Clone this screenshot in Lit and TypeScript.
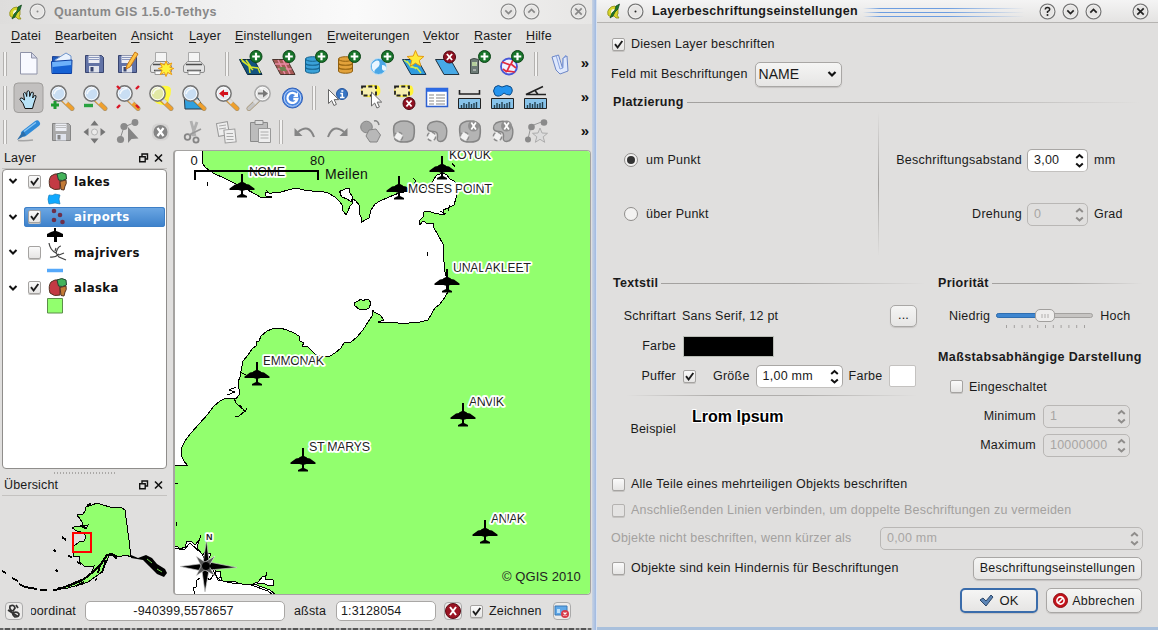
import { LitElement, html, svg, css, TemplateResult } from "lit";
import { customElement, property } from "lit/decorators.js";

type Glyph = TemplateResult;

/* ---------- shared icon fragments, drawn on a 33 x 34 cell ---------- */

const plusBadge = svg`<circle cx="19.5" cy="11.5" r="6" fill="#17742a" stroke="#0c4417"/>
  <path d="M15.7 11.5h7.6M19.5 7.7v7.6" stroke="#fff" stroke-width="2.2"/>`;
const badge = (dx: number, dy: number) => svg`<g transform="translate(${dx} ${dy})">${plusBadge}</g>`;
const redBadge = (x: number, y: number) => svg`<circle cx=${x} cy=${y} r="6" fill="#8f1020" stroke="#4c0610"/>
  <path d="M${x - 2.6} ${y - 3}l5.2 6m0 -6l-5.2 6" stroke="#fff" stroke-width="1.9"/>`;

const lens = (fill = "#c9def3", handle = "#f0a02c", rim = "#777") => svg`
  <path d="M18 19l9 8.5" stroke="#7a5a20" stroke-width="5" stroke-linecap="round" opacity=".55"/>
  <path d="M18 19l9 8.5" stroke=${handle} stroke-width="3.6" stroke-linecap="round"/>
  <path d="M18 18l4 4" stroke="#ddd" stroke-width="3.4"/>
  <circle cx="13.5" cy="12.5" r="7.6" fill=${fill} stroke=${rim} stroke-width="1.6"/>
  <circle cx="13.5" cy="12.5" r="6.3" fill="none" stroke="#fff" stroke-width=".9"/>
  <path d="M9 13q1-5 7-5.500" stroke="#fff" stroke-width="1.600" fill="none" opacity=".8"/>`;

const printer = svg`
  <path d="M11.500 5.500h11v10h-11z" fill="#f4f4f4" stroke="#aaa"/>
  <path d="M6.500 19l4-4.500h13l4 4.500v5q0 1.500-1.500 1.500h-18q-1.500 0-1.500-1.500z" fill="#e3e3e3" stroke="#8d8d8d"/>
  <path d="M9 17.500h16M10 23.500h14" stroke="#4d4d4d" stroke-width="1.400"/>
  <path d="M11 24h12v3.500h-12z" fill="#fafafa" stroke="#999"/>`;

const disk = (a: string, b: string) => svg`
  <path d="M7.500 8.500h16l2 2v15h-18z" fill=${a} stroke=${b}/>
  <path d="M10.500 8.500h11v7.500h-11z" fill="#eceef4"/><path d="M11 10.500h10M11 12.500h10" stroke=${a} stroke-width=".7"/>
  <path d="M11 19h10v6.500h-10z" fill="#dfe3ec"/><path d="M12.500 20h3v4.500h-3z" fill=${b}/>`;

const cylinder = (a: string, b: string) => svg`
  <path d="M5.500 12v12c0 3 14 3 14 0v-12z" fill=${a} stroke=${b}/>
  <ellipse cx="12.500" cy="12" rx="7" ry="2.300" fill=${a} stroke=${b}/>
  <path d="M5.500 16c0 3 14 3 14 0M5.500 20c0 3 14 3 14 0" fill="none" stroke=${b} stroke-width="1.200"/>`;

const ruler = svg`<path d="M5.500 17.500h22v10h-22z" fill="#87c3ea" stroke="#222"/>
  <path d="M8.500 27v-3m2.500 3v-5m2.500 5v-4m2.500 4v-6m2.500 6v-4m2.500 4v-5m2.500 5v-6" stroke="#23404f" stroke-width="1.400"/>`;

const cursor = (x: number, y: number) => svg`<path d="M${x} ${y}v14l3.200-3 2.200 5 2.500-1.100-2.200-4.800h4.500z" fill="#fff" stroke="#666" stroke-width="1"/>`;

const selection = svg`<path d="M9 6q8-4 16-1 3 6 0 9-8 4-16 1-4-6 0-9z" fill="#fff23a"/>
  <path d="M8 5.500h14v9h-14z" fill="#f6efb0" stroke="#222" stroke-width="1.800" stroke-dasharray="4 2.300"/>`;

const blob = svg`<path d="M7 11q2-5 10-5t10 5q1 8-1 13-2 3-9 3t-9-3q-2-8-1-13z" fill="#b4b4b4" stroke="#858585" stroke-width="1.600"/>`;
const hook = svg`<path d="M10 8q7-3.500 13 0 5 4 3.500 12-1 6-6 6.500-4 0-3-5 .5-5-4-5-6 0-6-3.500 0-3 2.500-5z" fill="#b4b4b4" stroke="#858585" stroke-width="1.400"/>`;
const ringlet = svg`<circle cx="11.500" cy="21.500" r="4.200" fill="#f2f2f2" stroke="#8c8c8c" stroke-width="1.500" stroke-dasharray="4 2.500"/>`;
const greyX = svg`<circle cx="20.500" cy="11" r="5.500" fill="#909090"/><path d="M18.300 7.500l4.600 7m0-7l-4.600 7" stroke="#fff" stroke-width="1.700"/>`;

const I: Record<string, Glyph> = {
  fresh: svg`<path d="M8.500 5.500h11l5.500 5.500v16h-16.500z" fill="#f8f9ff" stroke="#8f93a8"/><path d="M19.500 5.500v5.500h5.500z" fill="#d5d8ea" stroke="#8f93a8"/>`,
  open: svg`<path d="M7.500 9.500l8 .5 10-1v16h-18z" fill="#1c5bc0" stroke="#1a3f93"/><path d="M10 13l11-7 5 3v8h-16z" fill="#e9f2fd" stroke="#6f94ca"/>
    <path d="M7 26.500l-.5-12 20.500-1.500-.5 13.500z" fill="#6db1fa" stroke="#0a3c9f"/><path d="M7.500 20l19-2-.3 8H7.500z" fill="#1662d4"/>`,
  save: disk("#6273a6", "#38446f"),
  saveAs: svg`${disk("#6273a6", "#38446f")}<path d="M24 5l3 2-8 13-4 2 1-4z" fill="#ffc446" stroke="#c8761a"/>`,
  printNew: svg`${printer}<path d="M22 14l1.600 4 4.200-2-2 4.300 4 1.200-4 1.700 2 4.300-4.200-2-1.600 4-1.600-4-4.200 2 2-4.300-4-1.700 4-1.200-2-4.300 4.200 2z" fill="#fff23c" stroke="#ee9c12"/>`,
  print: printer,
  vector: svg`<path d="M5.500 12.500h14.500l8 15h-14.500z" fill="#13537f" stroke="#0b2a3e"/><path d="M8 14l7 5 1 7M12 13l5 7 7 1 2 5M7 12l12 11" stroke="#d7e629" stroke-width="1.500" fill="none"/>${badge(2.5, -2)}`,
  raster: svg`<path d="M5.500 12.500h14.500l8 15h-14.500z" fill="#a65a55" stroke="#4a332d"/><path d="M8 17h14M10.500 22h14M11 13l7 14M16 13l7 14" stroke="#e88aa3" stroke-width="1.500"/><path d="M12 20h6l2 4h-6z" fill="#6d8450"/>${badge(2.5, -2)}`,
  postgis: svg`${cylinder("#3aa1d8", "#15628d")}${badge(2, -2)}`,
  spatialite: svg`${cylinder("#e2a23b", "#91600f")}${badge(2, -2)}`,
  wms: svg`<circle cx="12.500" cy="19.500" r="8" fill="#4aa7e6" stroke="#c3e0f4"/><path d="M6 17q4-5 7-3 2 4-2 7t-2 5q-4-3-3-9zM16 18q5 0 4 5-3 2-4-1z" fill="#e9f6ff"/>${badge(2, -2)}`,
  newShape: svg`<path d="M3.500 12.500h15l8.500 15h-15z" fill="#2f9bde" stroke="#14334e"/><path d="M8 14l4 6 6 1 4 5M5 13l12 9" stroke="#cfec4d" stroke-width="1.500" fill="none"/>
    <path d="M16.500 3.500l2.400 5.600 6 .4-4.600 3.900 1.500 5.900-5.300-3.200-5.200 3.200 1.400-5.900-4.600-3.900 6.100-.4z" fill="#ffe93b" stroke="#e59a12"/>`,
  remove: svg`<path d="M3.500 12.500h15l8.500 15h-15z" fill="#47a9e6" stroke="#22323f"/>${redBadge(17.5, 10)}`,
  gps: svg`<path d="M5.500 12.500q3-2 8 0v14h-8z" fill="#6c7a75" stroke="#414a47"/><path d="M7 15h5v4h-5z" fill="#b4cf9c"/><path d="M11 16h1M8 23h3" stroke="#ddd"/>${badge(0, -2)}`,
  wfs: svg`<circle cx="11" cy="19.500" r="8" fill="#eef1ff" stroke="#4656d6" stroke-width="1.800"/><path d="M4 15l8 3-3 6 8 1M15 13l-2 4 5 4M5 22l4 3" stroke="#e22b3e" stroke-width="1.700" fill="none"/>${badge(0, -2)}`,
  book: svg`<path d="M9 10l4 13 4 4 8-3-1-15-4 2-.5 10-4-13z" fill="#dfe8fc" stroke="#6c86c6"/><path d="M13 8l4 14 3-1v-10l3-3" fill="none" stroke="#8ba5e0"/>`,
  hand: svg`<rect x="2" y="2" width="29" height="29.500" rx="4" fill="#c2c0bf" stroke="#a09e9c"/>
    <path d="M13 27.500l-2-5-3-4q0-2 2-1.500l2.500 2-1-6.500q1-2 2.500 0l.7 3 .3-5q1.600-1.500 2.500 0l.2 5 1.500-4q2-1 2.200.5l-.7 5 1.800-2.500q2-.4 1.500 1.500l-2 6-1.500 5.500z" fill="#b9e3f7" stroke="#111"/>`,
  zoomIn: svg`${lens()}<path d="M6 24h8M10 20v8" stroke="#1f9a31" stroke-width="3"/>`,
  zoomOut: svg`${lens()}<path d="M6 24.500h9" stroke="#2aa341" stroke-width="3.400"/>`,
  zoomFull: svg`${lens()}<path d="M6 5l3 3M28 5l-3 3M6 27l3-3M28 27l-3-3" stroke="#da1625" stroke-width="2.400"/>`,
  zoomSel: svg`<path d="M17 5q10-1 10 4t-2 8q0 8-6 7-8-1-9-5z" fill="#fff93b"/>${lens("#e1e8a4")}`,
  zoomLayer: svg`<path d="M7 12h11l9 16h-19z" fill="#31a0dd" stroke="#2b3b49"/>${lens()}`,
  zoomLast: svg`${lens("#e4e8ee")}<path d="M18 12h-4v2.500l-5-4 5-4v2.500h4z" fill="#d3121d" transform="translate(0 2)"/>`,
  zoomNext: svg`<g transform="matrix(-1 0 0 1 33 0)">${lens("#e2e2e2", "#c4c4c4", "#aaa")}</g><path d="M15 11.500h5v-3l5 4-5 4v-3h-5z" fill="#777"/>`,
  refresh: svg`<circle cx="16.500" cy="17" r="10" fill="#4b86e0" stroke="#2e5fb8"/><circle cx="16.500" cy="17" r="8.300" fill="none" stroke="#bcd4f7"/><path d="M20.500 14a5 5 0 1 0 .8 4h-4" fill="none" stroke="#fff" stroke-width="2.300"/><path d="M22 11v5h-5z" fill="#fff"/>`,
  identify: svg`<circle cx="21" cy="13" r="5.500" fill="#3775c4" stroke="#24549b"/><path d="M19.300 12.500h2v4M19 16.500h4.500M20.300 10h2" stroke="#fff" stroke-width="1.500" fill="none"/>${cursor(7.5, 8.5)}`,
  select: svg`${selection}${cursor(17.5, 11)}`,
  deselect: svg`${selection}${redBadge(22, 22.5)}`,
  table: svg`<path d="M6.500 7.500h21v18h-21z" fill="#fff" stroke="#2d60d1" stroke-width="1.500"/><path d="M6.500 9h21" stroke="#2d6be6" stroke-width="3.500"/><path d="M9 14h5m2 0h9M9 17h5m2 0h9M9 20h5m2 0h9M9 23h5m2 0h9" stroke="#888" stroke-width="1.200"/>`,
  length: svg`${ruler}<path d="M6.500 9v4h20v-4" fill="none" stroke="#222" stroke-width="1.600"/>`,
  area: svg`${ruler}<path d="M9 6q3-3 7 0 5-3 9 0 3 4-1 8-4 0-6-2-5 5-9 2-3-4 0-8z" fill="#2494ef" stroke="#0d4b87"/>`,
  angle: svg`${ruler}<path d="M27 13.500h-20l17-8M16 9.500l3 4" fill="none" stroke="#222" stroke-width="1.600"/>`,
  edit: svg`<path d="M6 25.500q8 .5 15-.5" stroke="#a5a5a5" stroke-width="1.500" fill="none"/><path d="M25 8.500l-13 10" stroke="#2e8ad8" stroke-width="6" stroke-linecap="round"/><path d="M11 16l-6 9 9-5z" fill="#2c6ea9"/><path d="M24 7.500l-12 9" stroke="#8bc6f4" stroke-width="1.300"/>`,
  saveGrey: disk("#a9a9a9", "#858585"),
  move: svg`<path d="M16.500 5.500l4 5h-8zM16.500 28.500l4-5h-8zM5.500 17l5-4v8zM27.500 17l-5-4v8z" fill="#757575"/><circle cx="16.500" cy="17" r="3" fill="#ecebea" stroke="#b5b5b5"/>`,
  node: svg`<path d="M9 24l4-12 12-5" stroke="#8c8c8c" fill="none"/><circle cx="9.500" cy="24.500" r="3.600" fill="#8a8a8a"/><circle cx="13" cy="11.500" r="3.600" fill="#8a8a8a"/><circle cx="24" cy="7.500" r="3.400" fill="#8a8a8a"/><path d="M17 12v16l3.500-4 7-.5z" fill="#858585"/>`,
  del: svg`<rect x="8" y="8.500" width="17" height="17" rx="6" fill="#d3d2d1"/><circle cx="16.500" cy="17" r="7" fill="#858585"/><path d="M13.500 13l6 8m0-8l-6 8" stroke="#fff" stroke-width="2.200"/>`,
  cut: svg`<path d="M14 6l4 15M20 7l-5 14" stroke="#b0b0b0" stroke-width="2.800"/><circle cx="10.500" cy="22" r="2.800" fill="none" stroke="#858585" stroke-width="1.800"/><circle cx="19" cy="25" r="2.600" fill="none" stroke="#858585" stroke-width="1.800"/><path d="M12 20l12-6" stroke="#999" stroke-width="1.800"/>`,
  copy: svg`<path d="M7.500 7.500h11v13h-11z" transform="rotate(-10 13 14)" fill="#eee" stroke="#999"/><path d="M14.500 14.500h11v13h-11z" transform="rotate(-6 20 21)" fill="#eee" stroke="#999"/><path d="M9 11l7-1m-7 4l7-1M16.500 18.500h6.500m-6.500 3h7m-7 3h7" stroke="#aaa"/>`,
  paste: svg`<path d="M7.500 7.500h17v19h-17z" fill="#bcbcbc" stroke="#8a8a8a"/><path d="M12 5.500h8v4h-8z" fill="#ddd" stroke="#8a8a8a"/><path d="M15.500 13.500h12v14h-12z" fill="#eee" stroke="#999"/><path d="M17.500 17h8m-8 3h8m-8 3h8" stroke="#aaa"/>`,
  undo: svg`<path d="M26 22q-5-14-16-5" fill="none" stroke="#858585" stroke-width="2"/><path d="M6.500 13v8h8z" fill="#858585"/>`,
  redo: svg`<path d="M7 22q5-14 16-5" fill="none" stroke="#858585" stroke-width="2"/><path d="M26.500 13v8h-8z" fill="#858585"/>`,
  simplify: svg`<circle cx="12.500" cy="12" r="5.800" fill="#a2a2a2" stroke="#858585"/><path d="M15 15l7-1 4.500 6-3.500 7h-7l-4-6z" fill="#b8b8b8" stroke="#858585"/><path d="M20 6q4-1 5 4" stroke="#858585" fill="none" stroke-width="1.500"/>`,
  ring: svg`${blob}${ringlet}`,
  island: svg`${hook}${ringlet}`,
  delRing: svg`${blob}${ringlet}${greyX}`,
  delPart: svg`${hook}${ringlet}${greyX}`,
  reshape: svg`<path d="M9 24l3-13 13-5" stroke="#999" fill="none"/><circle cx="9" cy="24.500" r="3" fill="#8a8a8a"/><circle cx="12.500" cy="12" r="3.300" fill="#8a8a8a"/><circle cx="25" cy="7.500" r="3.300" fill="#8a8a8a"/><path d="M21 13l2 5 5.500.3-4.300 3.500 1.500 5.500-4.700-3-4.700 3 1.500-5.500-4.300-3.500 5.500-.3z" fill="#dcdcdc" stroke="#adadad"/>`,
};

const shared = css`
  * { box-sizing: border-box; }
  svg { display: block; flex: none; }
`;

@customElement("tool-strip")
class ToolStrip extends LitElement {
  @property({ attribute: false }) groups: string[][] = [];
  static styles = [shared, css`
    :host { display: flex; align-items: center; height: 34px; padding-left: 3px; }
    .handle { width: 4px; height: 24px; border: solid #b3b1af; border-width: 0 1px; background: #f3f2f1; flex: none; margin-right: 5px; }
    .group { display: flex; margin-right: 3px; }
    .short { margin-right: 15px; }
    .more { margin-left: auto; margin-right: 3px; padding-bottom: 3px; font: bold 15px/15px "Liberation Sans", sans-serif; letter-spacing: 0; color: #111; }
  `];
  render() {
    return html`${this.groups.map((g) => html`<span class="handle"></span>
      <span class="group ${g.length === 6 ? "short" : ""}">${g.map((n) => html`<svg width="33" height="34" viewBox="0 0 33 34">${I[n]}</svg>`)}</span>`)}
      <span class="more">»</span>`;
  }
}

@customElement("check-mark")
class CheckMark extends LitElement {
  @property({ type: Boolean }) on = false;
  @property({ type: Boolean }) dim = false;
  static styles = [shared, css`
    :host { display: block; width: 14px; height: 14px; flex: none; }
    .box { width: 13px; height: 13px; margin: .5px; border: 1px solid #a5a3a1; border-radius: 2px; background: linear-gradient(#fafafa, #e6e5e4); box-shadow: 0 1px 0 #c5c3c1; }
    .dim { border-color: #b4b2b0; background: #e4e3e2; }
  `];
  render() {
    return html`<div class="box ${this.dim ? "dim" : ""}">${this.on ? html`<svg width="11" height="11" viewBox="0 0 11 11"><path d="M2 5.200l2.600 3.300L9.300 2" fill="none" stroke="#1c1c1c" stroke-width="1.900"/></svg>` : ""}</div>`;
  }
}

@customElement("spin-field")
class SpinField extends LitElement {
  @property() value = "";
  @property({ type: Boolean }) dim = false;
  static styles = [shared, css`
    :host { display: block; height: 23px; flex: none; }
    .field { display: flex; align-items: center; justify-content: space-between; height: 23px; padding: 0 3px 0 6px; border: 1px solid #a9a7a5; border-bottom-color: #c3c1bf; border-radius: 5px; background: #fff; }
    .dim { background: transparent; color: #a8a6a4; border-color: #b9b7b5; }
  `];
  render() {
    return html`<div class="field ${this.dim ? "dim" : ""}"><span>${this.value}</span>
      <svg width="9" height="17" viewBox="0 0 9 17"><path d="M1.200 6L4.500 3l3.300 3M1.200 11.500l3.300 3 3.300-3" fill="none" stroke=${this.dim ? "#8f8d8b" : "#111"} stroke-width="2"/></svg></div>`;
  }
}

@customElement("title-button")
class TitleButton extends LitElement {
  @property() kind = "";
  @property({ type: Boolean }) active = false;
  static styles = [shared, css`:host { display: block; width: 17px; height: 17px; flex: none; }`];
  render() {
    const c = this.active ? "#222" : "#888";
    const marks: Record<string, Glyph> = {
      dot: svg`<circle cx="8.500" cy="8.500" r="1" fill=${c}/>`,
      down: svg`<path d="M5.300 7.300l3.200 3.200 3.200-3.200" fill="none" stroke=${c} stroke-width="1.700"/>`,
      up: svg`<path d="M5.300 9.700l3.200-3.200 3.200 3.200" fill="none" stroke=${c} stroke-width="1.700"/>`,
      close: svg`<path d="M5.300 5.300l6.400 6.400m0-6.400l-6.400 6.400" fill="none" stroke=${c} stroke-width="1.700"/>`,
      help: svg`<path d="M6.300 6.600q0-2.200 2.200-2.200t2.200 2q0 1.200-2.200 2.300v1.300" fill="none" stroke=${c} stroke-width="1.500"/><circle cx="8.500" cy="12" r="1" fill=${c}/>`,
    };
    return html`<svg width="17" height="17" viewBox="0 0 17 17"><circle cx="8.500" cy="8.500" r="7.400" fill="#e6e5e4" stroke=${this.active ? "#777" : "#8b8b8b"} stroke-width="1.300"/><circle cx="8.500" cy="8.500" r="6.300" fill="none" stroke="#f6f6f6" stroke-width=".7"/>${marks[this.kind]}</svg>`;
  }
}

const logo = html`<svg width="14" height="18" viewBox="0 0 14 18"><path d="M2 7q2-3 6-3l3 3v5l-1 1 2 3h-3l-2-2q-4 2-6-1-1-4 1-6z" fill="#d8d52a" stroke="#8d8b1a" stroke-width=".8"/><path d="M4.500 8q2-2 3.500 0l-2 5q-3-1-1.500-5z" fill="#f7f6dc"/><path d="M12.500 2L9 4 8 8l-3 3-2 5 3-2 2-4 3-3z" fill="#1d7a2d" stroke="#0e4419" stroke-width=".7"/></svg>`;

/* ---------- map canvas ---------- */

const planes: [number, number, string, number, number, number][] = [
  [242, 186, "NOME", 249, 176, 36], [399, 188, "MOSES POINT", 408, 193, 84], [442, 168, "KOYUK", 449, 159, 42],
  [447, 281, "UNALAKLEET", 453, 272, 78], [257, 374, "EMMONAK", 263, 365, 61], [463, 415, "ANVIK", 469, 406, 35],
  [303, 460, "ST MARYS", 309, 451, 61], [485, 532, "ANIAK", 491, 523, 34],
];

@customElement("map-canvas")
class MapCanvas extends LitElement {
  static styles = [shared, css`
    :host { display: block; margin-top: 1px; border: solid #a5a3a1; border-width: 1px 1px 1px 2px; border-radius: 4px; overflow: hidden; background: #fff; }
    .land { fill: #92ff6e; stroke: #000; stroke-width: 1; shape-rendering: crispEdges; }
    .sea { fill: #fff; stroke: #000; stroke-width: 1; shape-rendering: crispEdges; }
    .line { fill: none; stroke: #000; stroke-width: 1; shape-rendering: crispEdges; }
    .name { font: 12.500px "Liberation Sans", sans-serif; letter-spacing: 0; fill: #222; stroke: #fff; stroke-width: 3.500; stroke-linejoin: round; paint-order: stroke; }
    .north { font: bold 9px "Liberation Sans", sans-serif; }
    .plain { font: 13px "Liberation Sans", sans-serif; fill: #111; }
    .big { font: 14px "Liberation Sans", sans-serif; fill: #111; }
    .copy { font: 13px "Liberation Sans", sans-serif; fill: #222; }
  `];
  render() {
    return html`<svg width="415" height="443" viewBox="175 151 415 443">
      <path class="land" d="M202 150V163L206 168 210 171 215 174 224 178 236 184 246 189 255 194 262 198 272 197 266 196 265 193 268 192 266 190 270 194 274 192 281 192 288 190 296 188 304 190 312 191 320 191 328 193 335 197 340 202 342 205 343 211 346 215 348 211 350 206 352 204 353 199 356 201 359 205 359 213 361 217 361 223 365 220 369 218 371 210 375 204 380 201 389 197 399 193 414 190 430 186 434 179 437 175 443 173 447 175 450 179 454 181 457 184 456 198 454 205 448 208 443 210 444 214 439 214 434 213 428 211 424 212 423 217 419 221 420 225 423 221 428 224 433 223 434 228 438 235 443 244 443 255 444 262 445 272 448 283 448 292 445 297 440 304 435 308 432 313 428 320 420 322 411 322 407 324 398 323 390 322 384 323 378 322 384 320 380 315 374 312 373 310 372 316 368 322 363 330 357 337 351 342 344 343 341 348 335 353 330 356 322 357 315 354 311 350 308 347 302 346 304 343 300 341 299 336 294 333 287 330 280 328 272 329 267 331 261 336 259 341 256 342 257 345 252 349 248 355 243 361 241 371 240 377 238 382 239 389 239 395 236 399 226 398 220 401 214 406 208 414 199 424 191 433 185 441 182 447 181 455 184 461 187 465 182 465 174 466V547L177 546 180 549 185 547 187 541 191 541 195 545 199 540 197 548 201 552 200 558 205 552 211 554 208 560 213 565 216 572 222 578 221 581 234 581 240 584 254 584 262 587 270 590 276 595H591V150Z"/>
      <path class="land" d="M354 303L358 301 361 299 363 301 366 299 369 300 371 303 369 308 365 310 359 309 355 306Z"/>
      <path class="sea" d="M341 191L345 189 349 188 350 193 353 197 351 202 347 199 342 197 340 194Z"/>
      <path class="sea" d="M250 585L258 582 263 576 266 576 267 572 265 579 273 580 273 585 267 585 263 583 257 584ZM215 571L220 571 221 577 217 579ZM237 594L239 590 254 587 260 594Z"/>
      <path class="sea" d="M174 548L184 550 190 543 202 554 206 562 212 568 218 580 232 583 251 585 268 591 273 595 174 595Z" stroke="none"/>
      <path class="line" d="M207 182v4M427 252v4M341 190l-2 3M240 372l6 3M236 387l-7 3 6 2-8 3M234 398l2 5 9 8-7 6-3-1M240 405l5 7 2-4M200 578l-4 3v6l-3 1 2 6M204 576l6 4 4-6 6 6M201 535l-3 9M175 483h3M176 522v4M452 163l3 4M413 178l3 3-2 3M440 211l6 3M448 211l2-6"/>
      <g stroke="#000" fill="#000">
        <path d="M206.500 540l2.500 22 28 5.500-28 2.500-4 22-3-21-22-4.500 23-3z" stroke="#c7c7c7" stroke-width=".7"/>
        <path d="M196 556l9 6 10-6-6 10 6 10-10-6-9 6 5-10z" fill="#555" stroke="#eee" stroke-width=".6"/><circle cx="206" cy="566" r="3.500"/>
      </g>
      ${planes.map(([x, y, n, tx, ty, w]) => svg`
        <path transform="translate(${x} ${y})" d="M-1-12h2v8l3 1.500 0 .5 3 .5 2 1.500 3.500 2.500v1.500h-9l-2.500.7v3.300l4 2v1.500h-10v-1.500l4-2v-3.300l-2.500-.7h-9v-1.500l3.500-2.500 2-1.500 3-.5 0-.5 3-1.500z"/>
        <text class="name" x=${tx} y=${ty} textLength=${w} lengthAdjust="spacing">${n}</text>`)}
      <path d="M195 180v-9h123v9" fill="none" stroke="#000" stroke-width="2"/>
      <text class="plain" x="190.500" y="165">0</text><text class="plain" x="310" y="165">80</text>
      <text class="big" x="325" y="179" textLength="43">Meilen</text>
      <text class="name north" x="206" y="539.500">N</text>
      <text class="copy" x="502" y="581" textLength="79">© QGIS 2010</text>
    </svg>`;
  }
}

@customElement("map-overview")
class MapOverview extends LitElement {
  static styles = [shared, css`:host { display: block; } .land { fill: #92ff6e; stroke: #000; shape-rendering: crispEdges; } .isle { fill: none; stroke: #000; shape-rendering: crispEdges; }`];
  render() {
    return html`<svg width="165" height="98" viewBox="2 496 165 98">
      <path class="land" d="M97 503L92 505 86 507 85 511 83 514 77 515 80 519 82 522 83 526 88 525 86 529 80 526 76 526 72 528 77 531 84 533 86 537 84 541 79 542 74 546 73 551 73 556 79 556 80 562 84 566 91 567 94 566 91 574 82 581 70 586 58 588 68 588 88 582 102 572 109 556 114 554 118 557 126 555 131 557 129 540 127 525 125 510 122 508 110 507 103 505Z"/>
      <path class="isle" stroke-width="2" d="M62 588l10-4 12-5 9-7 8-8 6-9 5-1 5 5M100 565l-2 8M76 586l8-4M106 560l-4 13M87 505l4-1M80 526l7 2"/>
      <path class="isle" stroke-width="2" d="M2 571l4 2M12 578l6 3M19 584l6 3 12 2M40 590h7M53 590l8-1M62 537l4 3M54 550l2 2M56 570l2 2M68 556l4 1M95 580l2-1M82 582v3M77 562l4 2"/>
      <path d="M131 555l7 3 8-3 6 3 5 6 8 5 2 4-3 4-7-3-8-8-6-6-6-1-6-1z" fill="#000"/><path d="M147 559l5 4M157 569l5 3" stroke="#72d552"/>
      <rect x="73" y="533" width="18" height="19" fill="none" stroke="#f00" stroke-width="2"/>
    </svg>`;
  }
}

/* ---------- main window ---------- */

const polyIcon = svg`<path d="M3 4q4-3 8-2 0 4 1 6l0 9q-6 2-10-2-2-7 1-11z" fill="#c33a44" stroke="#532"/><path d="M9 2q5-3 9 0l.5 5q-4 2.500-8 1z" fill="#43b35a" stroke="#243"/><path d="M12 9.500l6-1.500q1 4-1 6l-1 4-3-.5z" fill="#c27a35" stroke="#532"/>`;
const layerIcons: Record<string, Glyph> = {
  poly: polyIcon,
  points: svg`<g fill="#6d2f49"><circle cx="6" cy="4" r="2.300"/><circle cx="12" cy="8" r="2.300"/><circle cx="6" cy="13" r="2.300"/><circle cx="14.500" cy="15" r="2.300"/></g>`,
  rivers: svg`<path d="M1 0q1 7 7 10l3 4 7 3M8 10q2-7 5-7M8 5l-1 3M11 12l5-2M2 14q5 1 9-3" fill="none" stroke="#444" stroke-width="1.200"/>`,
};
const layers: [string, string, boolean, Glyph][] = [
  ["lakes", "poly", true, svg`<path d="M2 4q4 1 6-1l5 1-1 4 1 5-5-1-6 1q-2-5 0-9z" fill="#10a9ff" stroke="#1477b2" stroke-width=".6"/>`],
  ["airports", "points", true, svg`<path d="M7 1h2v3l3 1 4 2v3h-6v5h-3v-5h-7v-3l4-2 3-1z" fill="#000"/>`],
  ["majrivers", "rivers", false, svg`<path d="M0 8.500h16" stroke="#55a8fa" stroke-width="3.500"/>`],
  ["alaska", "poly", true, svg`<path d="M.5.500h15v14.500h-15z" fill="#92ff6e" stroke="#5c8d4a"/>`],
];
const menu: string[] = ["Datei", "Bearbeiten", "Ansicht", "Layer", "Einstellungen", "Erweiterungen", "Vektor", "Raster", "Hilfe"];

@customElement("main-window")
class MainWindow extends LitElement {
  static styles = [shared, css`
    :host { display: flex; flex-direction: column; width: 592px; height: 630px; background: #e0dfde; letter-spacing: .15px; }
    .title { display: flex; align-items: center; height: 24px; padding: 0 5px 1px 9px; background: linear-gradient(90deg, #dedddc, #f0f0f0 35%, #fafafa 60%, #e7e6e5); color: #888; font-weight: bold; }
    .title .cap { margin: 0 auto 0 8px; letter-spacing: .34px; font-size: 12.500px; }
    .title title-button { margin-left: 6px; }
    .title .last { margin-left: 30px; }
    .menu { display: grid; grid-template-columns: 44px 76px 58px 46px 92px 96px 51px 52px 40px; height: 23px; align-items: center; padding-left: 11px; }
    .menu u { text-underline-offset: 2px; }
    .main { display: flex; height: 446px; padding: 0 1px 0 2px; }
    .docks { width: 165px; margin-right: 6px; display: flex; flex-direction: column; }
    .dock { display: flex; align-items: center; height: 20px; padding: 0 3px 1px 2px; border-bottom: 1px solid #c4c2c0; }
    .dock span { flex: 1; }
    .tree { height: 300px; border: 1px solid #8f8d8b; border-radius: 4px; background: #fff; padding: 1px 1px; font: bold 13px "DejaVu Sans Condensed", "DejaVu Sans", sans-serif; font-stretch: condensed; letter-spacing: .4px; color: #111; }
    .layer { display: flex; align-items: center; height: 20px; }
    .arrow { margin: 0 6px 0 4px; }
    .row { display: flex; align-items: center; flex: 1; height: 20px; padding-left: 3px; border-radius: 3px; }
    .row .kind { margin: 0 6px 0 7px; }
    .sel { background: linear-gradient(#6da8e4, #3c80ca); color: #fff; box-shadow: inset 0 0 0 1px #3d7fc6; }
    .legend { height: 15.600px; padding-left: 43px; }
    .grip { height: 6px; margin: 1px 50px 0 51px; background: radial-gradient(circle, #aaa8a6 .8px, transparent 1px) 0 0 / 3px 6px; }
    .status { display: flex; align-items: center; height: 32px; padding-left: 5px; }
    .input { height: 20px; border: 1px solid #a9a7a5; border-radius: 5px; background: #fff; font-size: 12.500px; line-height: 18px; flex: none; }
    .xy { width: 200px; text-align: center; margin-right: 9px; padding-right: 3px; }
    .scale { width: 100px; margin: 0 8px; padding-left: 4px; }
    .clip { overflow: hidden; width: 45px; margin: 0 9px 0 8px; direction: rtl; }
    .clip2 { width: 34px; }
    .draw { margin: 0 11px 0 6px; }
    .sq { width: 18px; height: 18px; border: 1px solid #aaa; border-radius: 4px; background: #ecebea; display: grid; place-items: center; flex: none; }
    .st { margin-right: 7px; }
    .under { margin-top: auto; height: 2px; background: repeating-linear-gradient(90deg, #666 0 3px, #aaa 3px 5px, #555 5px 10px, #b5b5b5 10px 12px); }
  `];
  render() {
    const dock = (t: string) => html`<div class="dock"><span>${t}</span>
      <svg width="25" height="10" viewBox="0 0 25 10"><path d="M3 3V1h5.500v5H6.500M.700 3.700h5.500v5H.700z" fill="none" stroke="#111" stroke-width="1.400"/><path d="M16 1.500l7 7m0-7l-7 7" stroke="#111" stroke-width="1.600"/></svg></div>`;
    return html`
      <div class="title">${logo}<title-button kind="dot"></title-button><span class="cap">Quantum GIS 1.5.0-Tethys</span>
        <title-button kind="down"></title-button><title-button kind="up"></title-button><title-button class="last" kind="close"></title-button></div>
      <div class="menu">${menu.map((m) => html`<span><u>${m[0]}</u>${m.slice(1)}</span>`)}</div>
      <tool-strip .groups=${[["fresh", "open", "save", "saveAs", "printNew", "print"], ["vector", "raster", "postgis", "spatialite", "wms", "newShape", "remove", "gps", "wfs"], ["book"]]}></tool-strip>
      <tool-strip .groups=${[["hand", "zoomIn", "zoomOut", "zoomFull", "zoomSel", "zoomLayer", "zoomLast", "zoomNext", "refresh"], ["identify", "select", "deselect", "table", "length", "area", "angle"]]}></tool-strip>
      <tool-strip .groups=${[["edit", "saveGrey", "move", "node", "del", "cut", "copy", "paste"], ["undo", "redo", "simplify", "ring", "island", "delRing", "delPart", "reshape"]]}></tool-strip>
      <div class="main">
        <div class="docks">
          ${dock("Layer")}
          <div class="tree">${layers.map(([n, k, on, leg], i) => html`
            <div class="layer"><svg class="arrow" width="10" height="8" viewBox="0 0 10 8"><path d="M1.500 2l3.500 3.500L8.500 2" fill="none" stroke="#111" stroke-width="2"/></svg>
              <span class="row ${i === 1 ? "sel" : ""}"><check-mark ?on=${on}></check-mark><svg class="kind" width="20" height="19" viewBox="0 0 20 19">${layerIcons[k]}</svg>${n}</span></div>
            <div class="legend"><svg width="16" height="16" viewBox="0 0 16 16">${leg}</svg></div>`)}</div>
          <div class="grip"></div>
          ${dock("Übersicht")}
          <map-overview></map-overview>
        </div>
        <map-canvas></map-canvas>
      </div>
      <div class="status">
        <span class="sq"><svg width="14" height="14" viewBox="0 0 14 14"><path d="M3 2q4-2 5 2l-2 3q-4-1-3-5zM6 9q4-2 6 1 0 3-4 3-3-2-2-4zM1 6l9 6M9 1l2 3" fill="none" stroke="#333" stroke-width="1.700"/></svg></span>
        <span class="clip">oordinat</span><span class="input xy">-940399,5578657</span>
        <span class="clip2">aßsta</span><span class="input scale">1:3128054</span>
        <span class="sq st"><svg width="16" height="16" viewBox="0 0 16 16"><circle cx="8" cy="8" r="7.500" fill="#9b1423" stroke="#5d0a14"/><path d="M5 4l6 8m0-8l-6 8" stroke="#fff" stroke-width="2"/></svg></span>
        <check-mark on></check-mark><span class="draw">Zeichnen</span>
        <span class="sq"><svg width="16" height="16" viewBox="0 0 16 16"><path d="M1 3h12v9H1z" fill="#5fa8e8" stroke="#3b79b5"/><path d="M3 6h3v4H3z" fill="#bfe0fa"/><circle cx="11" cy="11" r="4" fill="#d83a4a"/><path d="M9.500 9.500l3 3m0-3l-3 3" stroke="#fff" stroke-width="1.200"/></svg></span>
      </div>
      <div class="under"></div>`;
  }
}

/* ---------- label settings dialog ---------- */

@customElement("label-dialog")
class LabelDialog extends LitElement {
  static styles = [shared, css`
    :host { display: flex; flex-direction: column; width: 561px; height: 630px; background: #e0dfde; letter-spacing: .23px; }
    .title { display: flex; align-items: center; height: 23px; padding: 0 9px 0 10px; background: linear-gradient(#f4f4f4, #e4e3e2); border-bottom: 1px solid #b5b3b1; font-weight: bold; }
    .title .cap { margin: 0 5px 0 8px; letter-spacing: .3px; }
    .title title-button { margin-left: 6px; }
    .title .last { margin-left: 30px; }
    .lines { flex: 1; height: 10px; margin-top: 3px; background: repeating-linear-gradient(#6c9de0 0 1.500px, transparent 1.500px 4px); -webkit-mask: linear-gradient(90deg, transparent, #000 10%, #000 50%, transparent 95%); mask: linear-gradient(90deg, transparent, #000 10%, #000 50%, transparent 95%); }
    .body { padding: 11px 0 0 14px; height: 604px; }
    .row { display: flex; align-items: center; }
    .h20 { height: 20px; } .h26 { height: 26px; } .h28 { height: 28px; } .h30 { height: 30px; } .h34 { height: 34px; } .h40 { height: 40px; } .h54 { height: 54px; }
    check-mark + span { margin-left: 6px; }
    .select { display: flex; align-items: center; justify-content: space-between; width: 87px; height: 25px; margin-left: 7px; padding: 0 4px 0 3px; font-size: 14px; letter-spacing: 0; }
    .btn { border: 1px solid #a9a7a5; border-radius: 5px; background: linear-gradient(#f5f5f4, #e6e5e4); box-shadow: 0 1px 1px #c5c3c1; }
    .head { display: flex; align-items: center; font-weight: bold; padding-left: 2px; letter-spacing: .3px; white-space: nowrap; }
    .head i { flex: 1; height: 1px; margin-left: 3px; background: linear-gradient(90deg, #a3a19f, #a8a6a4 50%, transparent); }
    .h16 { height: 16px; width: 530px; }
    .place { display: flex; height: 153px; }
    .place .left { width: 267px; padding: 23px 0 0 13px; }
    .place .rule { width: 1px; height: 144px; margin-top: 2px; background: linear-gradient(transparent, #a3a19f 50%, transparent); }
    .place .right { padding-top: 23px; }
    .lab { text-align: right; }
    .lab143 { width: 143px; margin-right: 5px; letter-spacing: .28px; }
    .w61 { width: 61px; margin-right: 6px; }
    .radio { width: 14px; height: 14px; border: 1px solid #8f8d8b; border-radius: 50%; background: #f3f2f1; margin-right: 8px; display: grid; place-items: center; }
    .radio b { width: 8px; height: 8px; border-radius: 50%; background: #333; }
    .style { display: flex; height: 208px; }
    .text { width: 315px; margin-right: 12px; }
    .lab65 { width: 65px; margin-right: 6px; }
    .dots { width: 27px; height: 22px; margin-left: auto; margin-right: 9px; text-align: center; line-height: 18px; }
    .black { width: 91px; height: 21px; background: #000; border: 1px solid #b9bdb6; margin-left: 1px; }
    .white { width: 27px; height: 22px; background: #fff; border: 1px solid #c4c2c0; border-radius: 2px; margin-left: 7px; }
    .size { margin: 0 6px 0 17px; }
    .w87 { width: 87px; margin-right: 6px; }
    .line { height: 1px; margin: 6px 9px 5px 15px; background: linear-gradient(90deg, transparent, #b0aeac 30%, #b0aeac 60%, transparent); }
    .h56 { height: 56px; }
    .sample { font: bold 16px "Liberation Sans", sans-serif; letter-spacing: 0; color: #000; margin: 0 0 24px 10px; text-shadow: 1px 0 #fff, -1px 0 #fff, 0 1px #fff, 0 -1px #fff, 1px 1px #fff, -1px -1px #fff, 1px -1px #fff, -1px 1px #fff, 0 0 2px #fff; }
    .prio { width: 204px; }
    .prio .head { padding-left: 0; }
    .pad { padding-left: 11px; }
    .slider { margin: 3px 6px 0 6px; }
    .prio .big { height: 28px; margin-top: 14px; letter-spacing: .39px; }
    .h31 { height: 31px; padding-left: 11px; }
    .lab98 { width: 98px; margin-right: 7px; }
    .off { color: #a3a19f; letter-spacing: .2px; }
    .w262 { width: 263px; margin-left: auto; margin-right: 15px; }
    .wide { width: 169px; height: 23px; margin-left: auto; margin-right: 16px; text-align: center; line-height: 21px; }
    .foot { display: flex; align-items: center; justify-content: flex-end; height: 35px; padding-right: 16px; gap: 8px; }
    .ok, .cancel { display: flex; align-items: center; justify-content: center; gap: 5px; height: 25px; }
    .ok { width: 78px; border: 2px solid #3a6cab; font-size: 13px; }
    .cancel { width: 96px; gap: 4px; }
    .sys { height: 3px; background: #a9c0dc; }
  `];
  render() {
    const ticks = Array.from({ length: 11 }, (_, i) => svg`<path d="M${10.5 + i * 7.8} 18v3" stroke="#a3a19f"/>`);
    return html`
      <div class="title">${logo}<title-button kind="dot" active></title-button><span class="cap">Layerbeschriftungseinstellungen</span><span class="lines"></span>
        <title-button kind="help" active></title-button><title-button kind="down" active></title-button><title-button kind="up" active></title-button><title-button class="last" kind="close" active></title-button></div>
      <div class="body">
        <div class="row h20"><check-mark on></check-mark><span>Diesen Layer beschriften</span></div>
        <div class="row h40"><span>Feld mit Beschriftungen</span><span class="btn select">NAME<svg width="10" height="8" viewBox="0 0 10 8"><path d="M1.500 2l3.500 3.500L8.500 2" fill="none" stroke="#111" stroke-width="2.200"/></svg></span></div>
        <div class="head h16">Platzierung<i></i></div>
        <div class="place">
          <div class="left"><div class="row h54"><span class="radio"><b></b></span>um Punkt</div><div class="row h54"><span class="radio"></span>über Punkt</div></div>
          <div class="rule"></div>
          <div class="right">
            <div class="row h54"><span class="lab lab143">Beschriftungsabstand</span><spin-field class="w61" value="3,00"></spin-field>mm</div>
            <div class="row h54"><span class="lab lab143">Drehung</span><spin-field dim class="w61" value="0"></spin-field>Grad</div>
          </div>
        </div>
        <div class="style">
          <div class="text">
            <div class="head h40">Textstil<i></i></div>
            <div class="row h26"><span class="lab lab65">Schriftart</span>Sans Serif, 12 pt<span class="btn dots">...</span></div>
            <div class="row h34"><span class="lab lab65">Farbe</span><span class="black"></span></div>
            <div class="row h26"><span class="lab lab65">Puffer</span><check-mark on></check-mark><span class="size">Größe</span><spin-field class="w87" value="1,00 mm"></spin-field>Farbe<span class="white"></span></div>
            <div class="line"></div>
            <div class="row h56"><span class="lab lab65">Beispiel</span><span class="sample">Lrom Ipsum</span></div>
          </div>
          <div class="prio">
            <div class="head h40">Priorität<i></i></div>
            <div class="row h26 pad">Niedrig<svg class="slider" width="98" height="22" viewBox="0 0 98 22"><rect x=".5" y="6.500" width="96" height="4" rx="2" fill="#c6c4c2" stroke="#a3a19f"/><rect x=".5" y="6.500" width="45" height="4" rx="2" fill="#3e86d0" stroke="#2f6eb0"/><rect x="39.500" y="2.500" width="19" height="12" rx="4.500" fill="#eeedec" stroke="#a19f9d"/><path d="M46 7v4M49 7v4M52 7v4" stroke="#b0aeac"/>${ticks}</svg>Hoch</div>
            <div class="head big">Maßstabsabhängige Darstellung</div>
            <div class="row h31"><check-mark></check-mark><span>Eingeschaltet</span></div>
            <div class="row h28"><span class="lab lab98">Minimum</span><spin-field dim class="w87" value="1"></spin-field></div>
            <div class="row h30"><span class="lab lab98">Maximum</span><spin-field dim class="w87" value="10000000"></spin-field></div>
          </div>
        </div>
        <div class="row h26"><check-mark></check-mark><span>Alle Teile eines mehrteiligen Objekts beschriften</span></div>
        <div class="row h26 off"><check-mark dim></check-mark><span>Anschließenden Linien verbinden, um doppelte Beschriftungen zu vermeiden</span></div>
        <div class="row h30 off">Objekte nicht beschriften, wenn kürzer als<spin-field dim class="w262" value="0,00 mm"></spin-field></div>
        <div class="row h30"><check-mark></check-mark><span>Objekte sind kein Hindernis für Beschriftungen</span><span class="btn wide">Beschriftungseinstellungen</span></div>
        <div class="foot">
          <span class="btn ok"><svg width="15" height="13" viewBox="0 0 15 13"><path d="M1 6l3-2 3 3 5-6 2 2-7 9z" fill="#5b84b5" stroke="#2d4768"/></svg>OK</span>
          <span class="btn cancel"><svg width="15" height="15" viewBox="0 0 15 15"><circle cx="7.500" cy="7.500" r="7" fill="#c4141c" stroke="#8c0a10"/><circle cx="7.500" cy="7.500" r="3.600" fill="none" stroke="#fff" stroke-width="1.600"/><path d="M5 10l5-5" stroke="#fff" stroke-width="1.600"/></svg>Abbrechen</span>
        </div>
      </div>
      <div class="sys"></div>`;
  }
}

@customElement("app-root")
class AppRoot extends LitElement {
  static styles = css`
    :host { display: flex; width: 1158px; height: 630px; overflow: hidden; font: 12.500px "Liberation Sans", Arial, sans-serif; color: #1a1a1a; white-space: nowrap; }
    .gap { width: 5px; background: linear-gradient(90deg, #c9d3e2, #a5bde2 70%, #f2f4f8); }
  `;
  render() {
    return html`<main-window></main-window><div class="gap"></div><label-dialog></label-dialog>`;
  }
}
